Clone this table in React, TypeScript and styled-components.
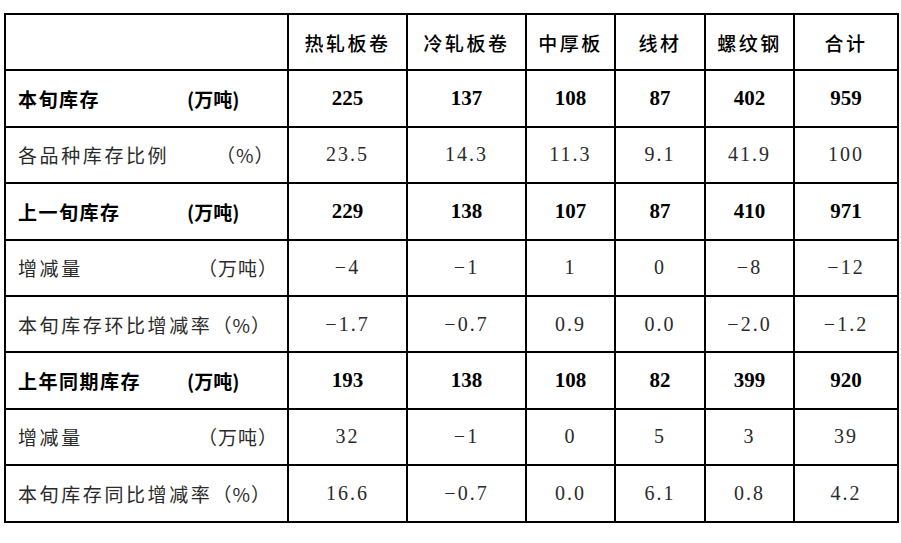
import React, { FC } from 'react';
import styled, { createGlobalStyle } from 'styled-components';

const GlobalStyle = createGlobalStyle`
    html, body {
        margin: 0;
        padding: 0;
        background: #fff;
    }
`;

type Row = {
    label: string;
    unit: string;
    labelWidth: number;
    bold: boolean;
    values: string[];
};

const headers = ['热轧板卷', '冷轧板卷', '中厚板', '线材', '螺纹钢', '合计'];
const colWidths = [283, 119, 119, 89, 90, 89, 104];

const rows: Row[] = [
    { label: '本旬库存', unit: '(万吨)', labelWidth: 169, bold: true, values: ['225', '137', '108', '87', '402', '959'] },
    { label: '各品种库存比例', unit: '（%）', labelWidth: 198, bold: false, values: ['23.5', '14.3', '11.3', '9.1', '41.9', '100'] },
    { label: '上一旬库存', unit: '(万吨)', labelWidth: 169, bold: true, values: ['229', '138', '107', '87', '410', '971'] },
    { label: '增减量', unit: '（万吨）', labelWidth: 180, bold: false, values: ['−4', '−1', '1', '0', '−8', '−12'] },
    { label: '本旬库存环比增减率', unit: '（%）', labelWidth: 0, bold: false, values: ['−1.7', '−0.7', '0.9', '0.0', '−2.0', '−1.2'] },
    { label: '上年同期库存', unit: '(万吨)', labelWidth: 169, bold: true, values: ['193', '138', '108', '82', '399', '920'] },
    { label: '增减量', unit: '（万吨）', labelWidth: 180, bold: false, values: ['32', '−1', '0', '5', '3', '39'] },
    { label: '本旬库存同比增减率', unit: '（%）', labelWidth: 0, bold: false, values: ['16.6', '−0.7', '0.0', '6.1', '0.8', '4.2'] },
];

const App: FC = () => {
    return (
        <Page>
            <GlobalStyle />
            <Table>
                <colgroup>
                    {colWidths.map((w, i) => (
                        <col key={i} style={{ width: w }} />
                    ))}
                </colgroup>
                <thead>
                    <tr>
                        <HeadCell />
                        {headers.map(h => (
                            <HeadCell key={h}>{h}</HeadCell>
                        ))}
                    </tr>
                </thead>
                <tbody>
                    {rows.map((r, i) => (
                        <tr key={i}>
                            <LabelCell $bold={r.bold}>
                                <LabelWrap>
                                    <LabelText $width={r.labelWidth}>{r.label}</LabelText>
                                    <Unit $bold={r.bold}>{r.unit}</Unit>
                                </LabelWrap>
                            </LabelCell>
                            {r.values.map((v, j) => (
                                <ValueCell key={j} $bold={r.bold}>
                                    {v}
                                </ValueCell>
                            ))}
                        </tr>
                    ))}
                </tbody>
            </Table>
        </Page>
    );
};

const Page = styled.div`
    padding: 13px 0 0 4px;
`;

const Table = styled.table`
    border-collapse: collapse;
    table-layout: fixed;
    width: 893px;

    tr {
        height: 56.4px;
    }
`;

const Cell = styled.td`
    border: 2px solid #000;
    padding: 0;
    vertical-align: middle;
`;

const HeadCell = styled(Cell).attrs({ as: 'th' })`
    text-align: center;
    font-family: 'Noto Sans CJK SC', sans-serif;
    font-size: 19px;
    font-weight: 500;
    letter-spacing: 2.5px;
    color: #000;
`;

const LabelCell = styled(Cell)<{ $bold: boolean }>`
    padding-left: 12px;
    font-family: 'Noto Sans CJK SC', sans-serif;
    font-size: 19px;
    font-weight: ${p => (p.$bold ? 700 : 400)};
    letter-spacing: ${p => (p.$bold ? '1.5px' : '2.6px')};
    color: ${p => (p.$bold ? '#000' : '#2a2a2a')};
    white-space: nowrap;
`;

const LabelWrap = styled.div`
    display: flex;
    align-items: center;
`;

const LabelText = styled.span<{ $width: number }>`
    display: inline-block;
    min-width: ${p => p.$width}px;
`;

const Unit = styled.span<{ $bold: boolean }>`
    letter-spacing: ${p => (p.$bold ? '0' : '1px')};
`;

const ValueCell = styled(Cell)<{ $bold: boolean }>`
    text-align: center;
    font-family: 'Liberation Serif', 'DejaVu Serif', serif;
    font-size: ${p => (p.$bold ? '21px' : '20px')};
    font-weight: ${p => (p.$bold ? 700 : 400)};
    letter-spacing: ${p => (p.$bold ? '0' : '2px')};
    color: ${p => (p.$bold ? '#000' : '#2a2a2a')};
`;

export default App;
